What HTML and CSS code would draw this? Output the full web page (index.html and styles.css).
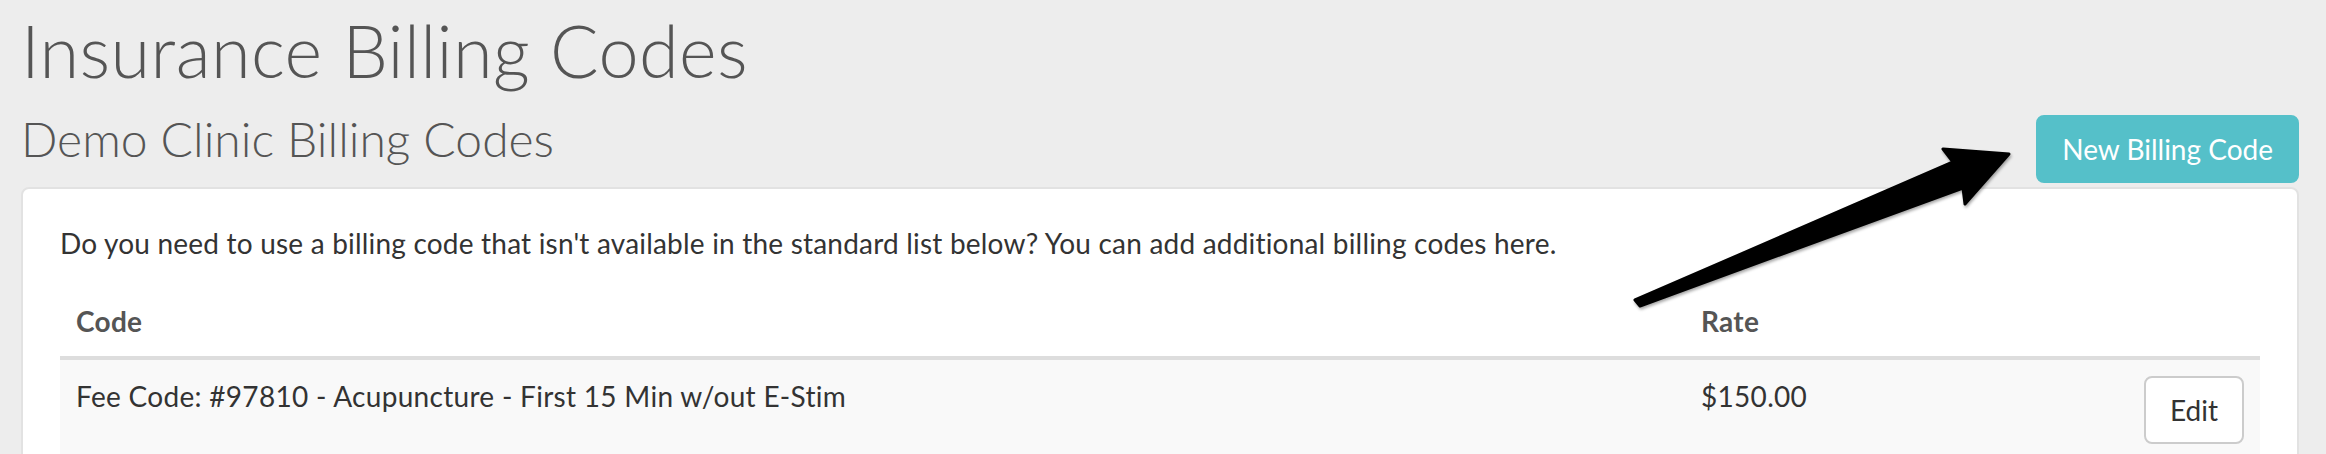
FILE: index.html
```html
<!DOCTYPE html>
<html lang="en">
<head>
    <meta charset="UTF-8">
    <title>Insurance Billing Codes</title>
    <link rel="stylesheet" href="styles.css">
</head>
<body>
    <div class="page">
        <h1 class="page-title">Insurance Billing Codes</h1>

        <!-- Clinic header with action button -->
        <div class="section-head">
            <h2>Demo Clinic Billing Codes</h2>
            <button class="btn btn-info">New Billing Code</button>
        </div>

        <div class="panel">
            <p class="intro">Do you need to use a billing code that isn't available in the standard list below? You can add additional billing codes here.</p>
            <table class="table table-striped">
                <thead>
                    <tr>
                        <th>Code</th>
                        <th class="col-rate">Rate</th>
                        <th class="col-actions"></th>
                    </tr>
                </thead>
                <tbody>
                    <tr>
                        <td>Fee Code: #97810 - Acupuncture - First 15 Min w/out E-Stim</td>
                        <td>$150.00</td>
                        <td class="col-actions"><button class="btn btn-default">Edit</button></td>
                    </tr>
                </tbody>
            </table>
        </div>

        <!-- callout arrow drawn over the page -->
        <svg class="callout" width="2326" height="454" viewBox="0 0 2326 454">
            <defs>
                <filter id="arrowShadow" x="-10%" y="-10%" width="120%" height="130%">
                    <feDropShadow dx="1" dy="2" stdDeviation="1.5" flood-color="#000" flood-opacity="0.35"/>
                </filter>
            </defs>
            <path d="M1635 300 L1953 162 L1943 149 L2009 154 L1965 204 L1963 188 L1640 306 Z"
                  fill="#000" stroke="#000" stroke-width="3" stroke-linejoin="round" filter="url(#arrowShadow)"/>
        </svg>
    </div>
</body>
</html>
```

FILE: styles.css
```css
* { box-sizing: border-box; }
body { margin: 0; background: #ededed; font-family: Lato, "Liberation Sans", sans-serif; color: #333; }
.page { position: relative; padding: 7px 27px 0 21px; height: 454px; overflow: hidden; }

.page-title { margin: 0 0 17px; font-size: 72px; font-weight: 300; line-height: 1.2; letter-spacing: 0.4px; color: #555; }
.section-head { display: flex; justify-content: space-between; align-items: flex-end; margin-bottom: 4px; }
.section-head h2 { margin: 0 0 15px; font-size: 48px; font-weight: 300; line-height: 1.2; color: #555; }

.btn { font-family: inherit; font-size: 28px; line-height: 40px; padding: 12px 24px; border: 2px solid transparent; border-radius: 8px; cursor: pointer; }
.btn-info { background: #55c0c9; border-color: #55c0c9; color: #fff; }
.btn-default { background: #fff; border-color: #ccc; color: #333; }

.panel { background: #fff; border: 2px solid #e2e2e2; border-radius: 8px; padding: 34px 37px 0; }
.intro { margin: 0 0 21px; font-size: 28px; line-height: 40px; letter-spacing: 0.2px; }

.table { width: 100%; border-collapse: collapse; font-size: 28px; line-height: 40px; letter-spacing: 0.3px; }
.table th { text-align: left; padding: 17px 16px 15px; color: #555; font-weight: 700; border-bottom: 4px solid #ddd; }
.table td { padding: 16px 16px; vertical-align: top; }
.table-striped tbody tr:nth-child(odd) { background: #f9f9f9; }
.col-rate { width: 443px; }
.col-actions { width: 128px; text-align: right; }

.callout { position: absolute; left: 0; top: 0; pointer-events: none; }
```
